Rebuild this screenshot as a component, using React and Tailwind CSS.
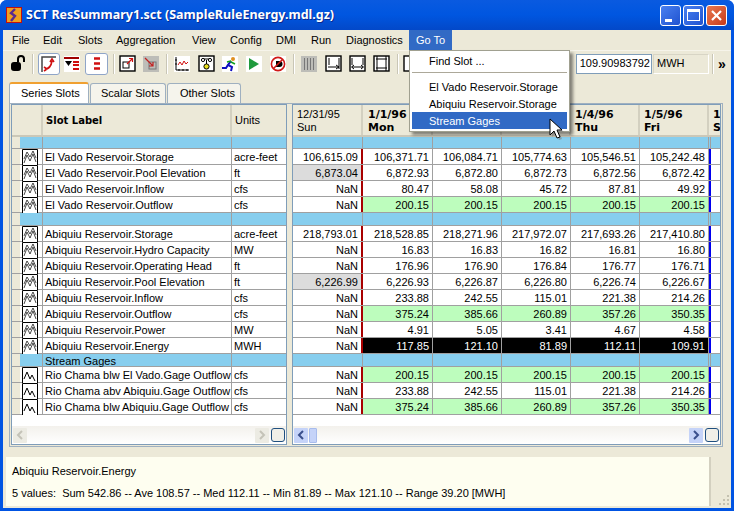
import React from "react";

const slotRows = [
  { type: "band", h: "h-[12px]" },
  { label: "El Vado Reservoir.Storage", units: "acre-feet", first: "106,615.09", vals: ["106,371.71", "106,084.71", "105,774.63", "105,546.51", "105,242.48"], icon: "multi" },
  { label: "El Vado Reservoir.Pool Elevation", units: "ft", first: "6,873.04", gray: true, vals: ["6,872.93", "6,872.80", "6,872.73", "6,872.56", "6,872.42"], icon: "multi" },
  { label: "El Vado Reservoir.Inflow", units: "cfs", first: "NaN", vals: ["80.47", "58.08", "45.72", "87.81", "49.92"], icon: "multi" },
  { label: "El Vado Reservoir.Outflow", units: "cfs", first: "NaN", kind: "green", vals: ["200.15", "200.15", "200.15", "200.15", "200.15"], icon: "multi" },
  { type: "band", h: "h-[13px]" },
  { label: "Abiquiu Reservoir.Storage", units: "acre-feet", first: "218,793.01", vals: ["218,528.85", "218,271.96", "217,972.07", "217,693.26", "217,410.80"], icon: "multi" },
  { label: "Abiquiu Reservoir.Hydro Capacity", units: "MW", first: "NaN", vals: ["16.83", "16.83", "16.82", "16.81", "16.80"], icon: "multi" },
  { label: "Abiquiu Reservoir.Operating Head", units: "ft", first: "NaN", vals: ["176.96", "176.90", "176.84", "176.77", "176.71"], icon: "multi" },
  { label: "Abiquiu Reservoir.Pool Elevation", units: "ft", first: "6,226.99", gray: true, vals: ["6,226.93", "6,226.87", "6,226.80", "6,226.74", "6,226.67"], icon: "multi" },
  { label: "Abiquiu Reservoir.Inflow", units: "cfs", first: "NaN", vals: ["233.88", "242.55", "115.01", "221.38", "214.26"], icon: "multi" },
  { label: "Abiquiu Reservoir.Outflow", units: "cfs", first: "NaN", kind: "green", vals: ["375.24", "385.66", "260.89", "357.26", "350.35"], icon: "multi" },
  { label: "Abiquiu Reservoir.Power", units: "MW", first: "NaN", vals: ["4.91", "5.05", "3.41", "4.67", "4.58"], icon: "multi" },
  { label: "Abiquiu Reservoir.Energy", units: "MWH", first: "NaN", kind: "black", vals: ["117.85", "121.10", "81.89", "112.11", "109.91"], icon: "multi" },
  { type: "band", h: "h-[13px]", label: "Stream Gages" },
  { label: "Rio Chama blw El Vado.Gage Outflow", units: "cfs", first: "NaN", kind: "green", vals: ["200.15", "200.15", "200.15", "200.15", "200.15"], icon: "single" },
  { label: "Rio Chama abv Abiquiu.Gage Outflow", units: "cfs", first: "NaN", vals: ["233.88", "242.55", "115.01", "221.38", "214.26"], icon: "single" },
  { label: "Rio Chama blw Abiquiu.Gage Outflow", units: "cfs", first: "NaN", kind: "green", vals: ["375.24", "385.66", "260.89", "357.26", "350.35"], icon: "single" },
];

// the menu hides the dates of the 2nd and 3rd data columns
const dates = [
  { w: "w-[70px]", d: "1/1/96", day: "Mon", pl: "pl-[5px]" },
  { w: "w-[69px]", d: "", day: "", pl: "pl-[4px]" },
  { w: "w-[69px]", d: "", day: "", pl: "pl-[4px]" },
  { w: "w-[69px]", d: "1/4/96", day: "Thu", pl: "pl-[4px]" },
  { w: "w-[69px]", d: "1/5/96", day: "Fri", pl: "pl-[4px]" },
];

function PlotIcon({ kind }) {
  return (
    <svg width="16" height="16" viewBox="0 0 16 16" className="block">
      <path d="M0.5 16V0.5H15.5V16" fill="white" stroke="black" />
      {kind === "multi" ? (
        <path d="M2 14L5 6L8 12L11 5L14 13M2 10L5 3L8 8L11 2L14 9" fill="none" stroke="black" strokeWidth="0.7" />
      ) : (
        <path d="M2 12L5 5L8 12L10 8L13 14" fill="none" stroke="black" strokeWidth="1" />
      )}
    </svg>
  );
}

function Framed({ children }) {
  return (
    <svg width="17" height="17" viewBox="0 0 17 17" className="shrink-0">
      <rect x="1" y="1" width="15" height="15" fill="white" stroke="black" strokeWidth="1.4" />
      {children}
    </svg>
  );
}

function Sep() {
  return <div className="w-[2px] h-[20px] bg-[#c9c6b6] border-r border-white shrink-0" />;
}

function Toolbar() {
  return (
    <div className="h-[26px] flex items-center pl-[7px] pr-[3px] border-t border-[#f6f4ea] shrink-0">
      <svg width="16" height="17" viewBox="0 0 16 17" className="shrink-0">
        <rect x="1" y="7" width="10" height="9" rx="3" fill="black" />
        <path d="M8 7V4a3 3 0 0 1 6 0v3" fill="none" stroke="black" strokeWidth="2" />
      </svg>
      <div className="w-[6px] shrink-0" />
      <Sep />
      <div className="w-[4px] shrink-0" />
      <div className="w-[22px] h-[22px] rounded-[3px] border border-[#8fa5c8] bg-white flex items-center justify-center shrink-0">
        <svg width="16" height="16" viewBox="0 0 16 16">
          <path d="M1 16V1H15" fill="none" stroke="#444" strokeWidth="1.5" />
          <path d="M4 13C8 13 10 11 11 5M9 6L11 3L13 6M3 11L6 13L3 15" fill="none" stroke="#d01010" strokeWidth="1.6" />
        </svg>
      </div>
      <div className="w-[4px] shrink-0" />
      <svg width="16" height="16" viewBox="0 0 16 16" className="shrink-0 bg-white">
        <path d="M0 2H15" stroke="#a00000" strokeWidth="2" />
        <path d="M1 5H8L4.5 10Z" fill="black" />
        <path d="M9 6H15M9 9H15M9 13H15" stroke="#d01010" strokeWidth="2" />
      </svg>
      <div className="w-[5px] shrink-0" />
      <div className="w-[23px] h-[22px] rounded-[3px] border border-[#8fa5c8] bg-white flex items-center justify-center shrink-0">
        <svg width="8" height="13" viewBox="0 0 8 13">
          <path d="M1 1.5H7M1 6.5H7M1 11.5H7" stroke="#d01010" strokeWidth="2.4" />
        </svg>
      </div>
      <div className="w-[5px] shrink-0" />
      <Sep />
      <div className="w-[4px] shrink-0" />
      <Framed>
        <rect x="4" y="7" width="6" height="6" fill="none" stroke="black" />
        <path d="M8 9L13 4M10 3.5H13.5V7" fill="none" stroke="#d01010" strokeWidth="1.2" />
      </Framed>
      <div className="w-[7px] shrink-0" />
      <div className="w-[16px] h-[16px] bg-[#bdbdb8] flex items-center justify-center shrink-0">
        <svg width="14" height="14" viewBox="0 0 14 14">
          <rect x="5" y="5" width="7" height="7" fill="none" stroke="#777" />
          <path d="M1 1L9 9M9 5V9H5" fill="none" stroke="#c02020" strokeWidth="1.2" />
        </svg>
      </div>
      <div className="w-[7px] shrink-0" />
      <Sep />
      <div className="w-[6px] shrink-0" />
      <svg width="16" height="16" viewBox="0 0 16 16" className="shrink-0 bg-white">
        <path d="M2 1V14H15" fill="none" stroke="black" />
        <path d="M4 9L6 6L8 9L10 5L12 8L14 6" fill="none" stroke="#d01010" />
        <path d="M1 4H3M1 8H3M5 13V15M9 13V15M13 13V15" stroke="black" />
      </svg>
      <div className="w-[8px] shrink-0" />
      <Framed>
        <circle cx="5" cy="5" r="1.6" fill="none" stroke="black" />
        <circle cx="12" cy="5" r="1.6" fill="none" stroke="black" />
        <path d="M6 4H11M8.5 5V9" stroke="black" />
        <circle cx="8.5" cy="11.5" r="2.6" fill="#e8e020" stroke="black" />
      </Framed>
      <div className="w-[7px] shrink-0" />
      <svg width="16" height="16" viewBox="0 0 16 16" className="shrink-0 bg-white">
        <circle cx="11" cy="3" r="2" fill="#e09020" />
        <path d="M9 5L6 9L10 11L9 15" fill="none" stroke="#1010c0" strokeWidth="2" />
        <path d="M6 9L4 12H0" fill="none" stroke="#1010c0" strokeWidth="2" />
        <path d="M9 5L5 6M9 6L13 8" fill="none" stroke="#10a020" strokeWidth="1.6" />
      </svg>
      <div className="w-[8px] shrink-0" />
      <svg width="16" height="16" viewBox="0 0 16 16" className="shrink-0 bg-white">
        <path d="M3 2L13 8L3 14Z" fill="#1f9a3c" />
      </svg>
      <div className="w-[8px] shrink-0" />
      <svg width="16" height="16" viewBox="0 0 16 16" className="shrink-0 bg-white">
        <path d="M6 5H9.5A3 3 0 0 1 9.5 11H6Z" fill="black" />
        <circle cx="8" cy="8" r="6.6" fill="none" stroke="#d01818" strokeWidth="1.6" />
        <path d="M3.5 12.5L12.5 3.5" stroke="#d01818" strokeWidth="1.6" />
      </svg>
      <div className="w-[7px] shrink-0" />
      <Sep />
      <div className="w-[6px] shrink-0" />
      <div className="w-[16px] h-[16px] bg-[#bdbdb8] flex justify-center gap-[2px] py-[2px] shrink-0">
        <div className="w-px h-full bg-[#777]" />
        <div className="w-px h-full bg-[#777]" />
        <div className="w-px h-full bg-[#777]" />
        <div className="w-px h-full bg-[#777]" />
      </div>
      <div className="w-[8px] shrink-0" />
      <Framed>
        <path d="M4 3V10M14 3V14" stroke="black" />
        <path d="M3 12H14M11 10L14 12L11 14" fill="none" stroke="black" />
      </Framed>
      <div className="w-[7px] shrink-0" />
      <Framed>
        <path d="M3 3V10M14 3V10" stroke="black" />
        <path d="M3 12H14M5 10L2.5 12L5 14M12 10L14.5 12L12 14" fill="none" stroke="black" />
      </Framed>
      <div className="w-[7px] shrink-0" />
      <Framed>
        <path d="M4 1V16M13 1V16M3 4H14M3 13H14" fill="none" stroke="black" />
      </Framed>
      <div className="w-[7px] shrink-0" />
      <Sep />
      <div className="w-[4px] shrink-0" />
      <Framed />
      <div className="flex-1" />
      <div className="w-[76px] h-[20px] bg-white border border-[#7f9db9] flex items-center justify-end pr-[1px] shrink-0 overflow-hidden whitespace-nowrap">
        109.90983792
      </div>
      <div className="w-[56px] h-[20px] border border-[#d8d5c5] border-r-white border-b-white flex items-center pl-[3px] shrink-0 ml-[1px]">
        MWH
      </div>
      <div className="w-[3px] shrink-0" />
      <Sep />
      <div className="w-[4px] shrink-0" />
      <div className="w-[10px] font-bold text-[14px] leading-none shrink-0">&raquo;</div>
    </div>
  );
}

function Scroll({ active, thumb }) {
  return (
    <div className="h-[18px] flex items-center pl-[1px] pr-[1px] bg-gradient-to-b from-[#f3f1ec] to-white shrink-0">
      <div className={`w-[14px] h-[15px] rounded-[1px] flex items-center justify-center ${active ? "bg-[#c5d3f8] text-[#3a4f8c]" : "bg-[#ecebe3] text-[#c4c3b8]"}`}>
        <svg width="8" height="10" viewBox="0 0 8 10">
          <path d="M6 1L2 5L6 9" fill="none" stroke="currentColor" strokeWidth="2" />
        </svg>
      </div>
      {thumb && <div className="w-[8px] h-[15px] ml-[1px] bg-[#c5d3f8] border border-[#a8bcec] rounded-[1px]" />}
      <div className="flex-1" />
      <div className={`w-[14px] h-[15px] rounded-[1px] flex items-center justify-center ${active ? "bg-[#c5d3f8] text-[#3a4f8c]" : "bg-[#ecebe3] text-[#c4c3b8]"}`}>
        <svg width="8" height="10" viewBox="0 0 8 10">
          <path d="M2 1L6 5L2 9" fill="none" stroke="currentColor" strokeWidth="2" />
        </svg>
      </div>
      <div className="w-[14px] h-[14px] ml-[2px] rounded-[3px] border border-[#1f4f7f] bg-[#f0efe8]" />
    </div>
  );
}

function LeftTable() {
  return (
    <div className="w-[276px] h-full border border-[#7f9db9] bg-white flex flex-col shrink-0">
      <div className="h-[32px] flex bg-[#ece9d8] border-b-2 border-[#cbc8b8] shrink-0">
        <div className="w-[8px]" />
        <div className="w-[23px] border-r-2 border-r-[#d3d0c0]" />
        <div className="w-[189px] border-r-2 border-r-[#d3d0c0] flex items-center pl-[3px] font-bold font-['DejaVu_Sans'] text-[10px]">Slot Label</div>
        <div className="w-[54px] flex items-center pl-[3px]">Units</div>
      </div>
      {slotRows.map((row, i) =>
        row.type === "band" ? (
          <div key={i} className={`${row.h} flex border-b border-[#a0a0a0] shrink-0`}>
            <div className="w-[8px] bg-[#ece9d8]" />
            <div className="w-[23px] bg-[#87ceee] border-r border-[#a0a0a0]" />
            <div className="w-[189px] bg-[#87ceee] border-r border-[#a0a0a0] pl-[2px] leading-[14px]">{row.label}</div>
            <div className="w-[54px] bg-[#87ceee]" />
          </div>
        ) : (
          <div key={i} className="h-[16px] flex border-b border-[#a0a0a0] shrink-0 leading-[17px]">
            <div className="w-[8px] bg-[#ece9d8]" />
            <div className="w-[23px] border-r border-[#a0a0a0] pl-[2px]">
              <PlotIcon kind={row.icon} />
            </div>
            <div className="w-[189px] border-r border-[#a0a0a0] pl-[2px] whitespace-nowrap overflow-hidden">{row.label}</div>
            <div className="w-[54px] pl-[2px]">{row.units}</div>
          </div>
        )
      )}
      <div className="flex-1" />
      <Scroll />
    </div>
  );
}

function ValueCell({ value, kind, w }) {
  const look = kind === "green" ? "bg-[#bdfdbd]" : kind === "black" ? "bg-black text-white" : "";
  return <div className={`${w} border-r border-[#a0a0a0] text-right pr-[3px] shrink-0 ${look}`}>{value}</div>;
}

function RightTable() {
  return (
    <div className="w-[429px] shrink-0 h-full border border-[#7f9db9] bg-white flex flex-col overflow-hidden">
      <div className="h-[32px] flex bg-[#ece9d8] border-b-2 border-[#cbc8b8] shrink-0 leading-[13px]">
        <div className="w-[70px] pl-[4px] pt-[3px] border-r-2 border-r-[#d3d0c0] shrink-0">
          12/31/95
          <br />
          Sun
        </div>
        {dates.map((d, i) => (
          <div key={i} className={`${d.w} ${d.pl} pt-[3px] font-bold font-['DejaVu_Sans'] border-r-2 border-r-[#d3d0c0] shrink-0 whitespace-nowrap`}>
            {d.d}
            <br />
            {d.day}
          </div>
        ))}
        <div className="pl-[4px] pt-[3px] font-bold font-['DejaVu_Sans'] overflow-hidden">
          1
          <br />
          S
        </div>
      </div>
      {slotRows.map((row, i) =>
        row.type === "band" ? (
          <div key={i} className={`${row.h} flex bg-[#87ceee] border-b border-[#a0a0a0] shrink-0`}>
            {["w-[70px]", "w-[70px]", "w-[69px]", "w-[69px]", "w-[69px]", "w-[69px]", "w-[2px]"].map((w, c) => (
              <div key={c} className={`${w} border-r border-[#a0a0a0] shrink-0`} />
            ))}
          </div>
        ) : (
          <div key={i} className="h-[16px] flex border-b border-[#a0a0a0] shrink-0 leading-[17px]">
            <div className={`w-[68px] text-right pr-[3px] shrink-0 ${row.gray ? "bg-[#dcdcdc]" : ""}`}>{row.first}</div>
            <div className="w-[2px] bg-[#a80000] shrink-0" />
            {row.vals.map((v, j) => (
              <ValueCell key={j} value={v} kind={row.kind} w={j === 0 ? "w-[70px]" : "w-[69px]"} />
            ))}
            <div className="w-[2px] bg-[#0000ee] shrink-0" />
          </div>
        )
      )}
      <div className="flex-1" />
      <Scroll active thumb />
    </div>
  );
}

export default function App() {
  return (
    <div
      className="relative w-[734px] h-[511px] overflow-hidden bg-[#0054e3] text-[11px] text-black flex flex-col rounded-t-[7px]"
      style={{ fontFamily: '"Liberation Sans", Tahoma, sans-serif' }}
    >
      <div className="h-[30px] shrink-0 flex items-center pl-[6px] pr-[7px] bg-gradient-to-b from-[#0a5ae0] via-[#0056e0] to-[#0348c8]">
        <svg width="16" height="16" viewBox="0 0 16 16" className="shrink-0">
          <rect x="0.5" y="0.5" width="15" height="15" fill="#f0a020" stroke="#c01010" />
          <path d="M9 2L5 6L9 9L5 14" fill="none" stroke="#5a2a90" strokeWidth="2.4" />
        </svg>
        <div className="ml-[4px] text-white font-bold font-['Noto_Sans'] text-[12.5px] whitespace-nowrap [text-shadow:1px_1px_0_#0a2a90]">
          SCT ResSummary1.sct (SampleRuleEnergy.mdl.gz)
        </div>
        <div className="flex-1" />
        <div className="w-[21px] h-[21px] rounded-[3px] border border-white bg-gradient-to-br from-[#4a80f0] to-[#1f52d0] flex items-end justify-start p-[3px]">
          <div className="w-[7px] h-[3px] bg-white ml-[1px]" />
        </div>
        <div className="w-[21px] h-[21px] ml-[2px] rounded-[3px] border border-white bg-gradient-to-br from-[#4a80f0] to-[#1f52d0] flex items-center justify-center">
          <div className="w-[13px] h-[12px] border border-white border-t-[3px]" />
        </div>
        <div className="w-[21px] h-[21px] ml-[2px] rounded-[3px] border border-white bg-gradient-to-br from-[#e87850] to-[#c83818] flex items-center justify-center">
          <svg width="13" height="13" viewBox="0 0 13 13">
            <path d="M2 2L11 11M11 2L2 11" stroke="white" strokeWidth="2.2" />
          </svg>
        </div>
      </div>

      <div className="flex-1 min-h-0 mx-[3px] mb-[3px] bg-[#ece9d8] flex flex-col">
        <div className="h-[20px] flex items-center pl-[3px] shrink-0">
          {[
            ["File", "w-[31px]"],
            ["Edit", "w-[35px]"],
            ["Slots", "w-[38px]"],
            ["Aggregation", "w-[76px]"],
            ["View", "w-[38px]"],
            ["Config", "w-[46px]"],
            ["DMI", "w-[35px]"],
            ["Run", "w-[35px]"],
            ["Diagnostics", "w-[69px]"],
          ].map(([name, w]) => (
            <div key={name} className={`${w} pl-[6px] whitespace-nowrap`}>
              {name}
            </div>
          ))}
          <div className="w-[43px] h-[20px] bg-[#316ac5] text-white flex items-center pl-[7px]">Go To</div>
        </div>
        <Toolbar />
        <div className="flex pl-[6px] pt-[6px] h-[27px] shrink-0 items-end">
          <div className="w-[80px] h-[21px] bg-white border border-[#9fb0c0] border-b-0 border-t-2 border-t-[#f0a030] rounded-t-[3px] flex items-center pl-[11px]">Series Slots</div>
          <div className="w-[76px] h-[20px] bg-[#f5f4ec] border border-[#9fb0c0] border-b-0 rounded-t-[3px] flex items-center pl-[10px] ml-px">Scalar Slots</div>
          <div className="w-[74px] h-[20px] bg-[#f5f4ec] border border-[#9fb0c0] border-b-0 rounded-t-[3px] flex items-center pl-[12px] ml-px">Other Slots</div>
        </div>
        <div className="h-[344px] shrink-0 ml-[6px] mr-[8px] pl-[1px] pr-[2px] pb-[1px] border border-[#9fb0c0] flex gap-[5px] bg-[#ece9d8]">
          <LeftTable />
          <RightTable />
        </div>
        <div className="h-[10px] shrink-0" />
        <div className="flex-1 min-h-0 flex mb-[2px]">
          <div className="flex-1 min-w-0 ml-[3px] bg-[#fefef0] border-r-2 border-r-[#d3d0c0] pl-[6px] flex flex-col justify-center gap-[8px] leading-[14px]">
            <div>Abiquiu Reservoir.Energy</div>
            <div className="whitespace-pre">5 values:  Sum 542.86 -- Ave 108.57 -- Med 112.11 -- Min 81.89 -- Max 121.10 -- Range 39.20 [MWH]</div>
          </div>
          <div className="w-[20px] shrink-0 flex items-end justify-end pr-[1px]">
            <svg width="12" height="12" viewBox="0 0 12 12">
              <path d="M9 1h2v2H9zM5 5h2v2H5zM9 5h2v2H9zM1 9h2v2H1zM5 9h2v2H5zM9 9h2v2H9z" fill="#c4c1b0" />
            </svg>
          </div>
        </div>
      </div>

      <div className="absolute left-[409px] top-[50px] w-[161px] h-[82px] bg-white border border-[#a0a090] shadow-[3px_3px_3px_rgba(0,0,0,0.45)] px-[2px] pt-[2px]">
        <div className="h-[17px] flex items-center pl-[17px]">Find Slot ...</div>
        <div className="h-px bg-[#aca899] mt-[2px] mb-[5px]" />
        <div className="h-[17px] flex items-center pl-[17px] pt-px whitespace-nowrap">El Vado Reservoir.Storage</div>
        <div className="h-[17px] flex items-center pl-[17px] pt-px whitespace-nowrap">Abiquiu Reservoir.Storage</div>
        <div className="h-[17px] flex items-center pl-[17px] pt-px bg-[#316ac5] text-white">Stream Gages</div>
      </div>

      <svg width="18" height="24" viewBox="0 0 18 24" className="absolute left-[549px] top-[118px]">
        <path d="M3 3V19L7 15L10 22L13 21L10 14H15Z" fill="#777" opacity="0.5" />
        <path d="M1 1V17L5 13L8 20L11 19L8 12H13Z" fill="white" stroke="black" />
      </svg>
    </div>
  );
}
